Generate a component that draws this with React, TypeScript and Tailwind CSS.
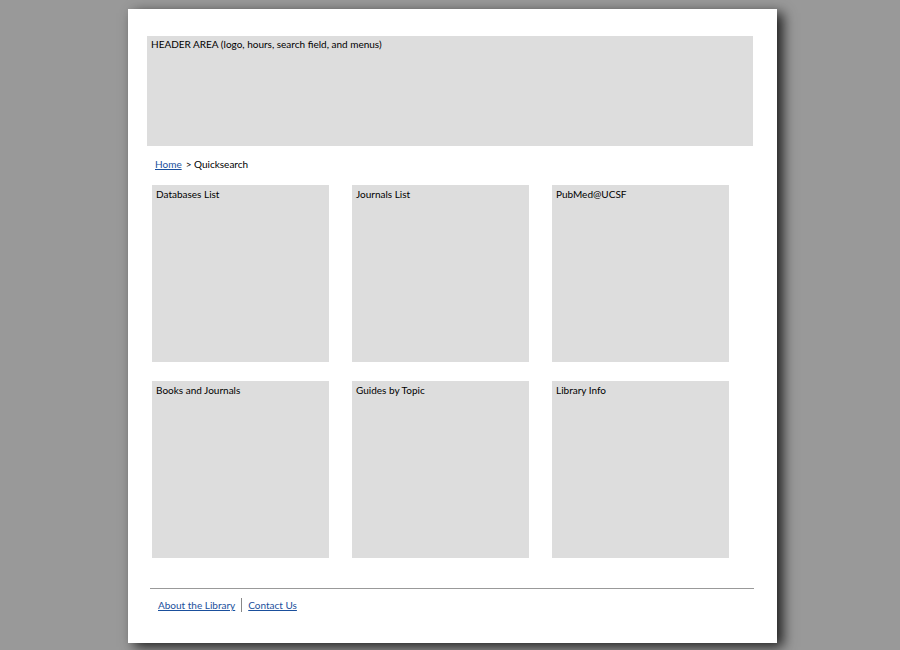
const boxes = [
  "Databases List",
  "Journals List",
  "PubMed@UCSF",
  "Books and Journals",
  "Guides by Topic",
  "Library Info",
];

function Tile({ title }: { title: string }) {
  return (
    <div className="h-[177px] w-[177px] bg-[#dddddd] px-[4px] pt-[2px] text-[10px] leading-[14px] text-black">
      {title}
    </div>
  );
}

export default function App() {
  return (
    <div
      className="h-[650px] w-[900px] overflow-hidden bg-[#999999] pt-[9px]"
      style={{ fontFamily: "Lato, 'Open Sans', sans-serif" }}
    >
      <div className="ml-[128px] h-[634px] w-[649px] bg-white pt-[27px] shadow-[6px_4px_12px_rgba(0,0,0,0.8)]">
        <div className="ml-[19px] h-[110px] w-[606px] bg-[#dddddd] px-[4px] pt-[1px] text-[10px] leading-[14px] text-black">
          HEADER AREA (logo, hours, search field, and menus)
        </div>

        <nav className="ml-[27px] mt-[11px] text-[10px] leading-[14px] text-black">
          <a href="#" className="text-[#1a4f9c] underline">
            Home
          </a>
          <span className="ml-[4px]">&gt; Quicksearch</span>
        </nav>

        <div className="ml-[24px] mt-[14px] grid w-[577px] grid-cols-3 gap-x-[23px] gap-y-[19px]">
          {boxes.map((b) => (
            <Tile key={b} title={b} />
          ))}
        </div>

        <div className="ml-[22px] mt-[30px] w-[604px] border-t border-[#999999]" />

        <div className="ml-[30px] mt-[9px] flex items-center text-[10px] leading-[14px]">
          <a href="#" className="text-[#1a4f9c] underline">
            About the Library
          </a>
          <span className="mx-[6px] h-[14px] w-px bg-[#888888]" />
          <a href="#" className="text-[#1a4f9c] underline">
            Contact Us
          </a>
        </div>
      </div>
    </div>
  );
}
